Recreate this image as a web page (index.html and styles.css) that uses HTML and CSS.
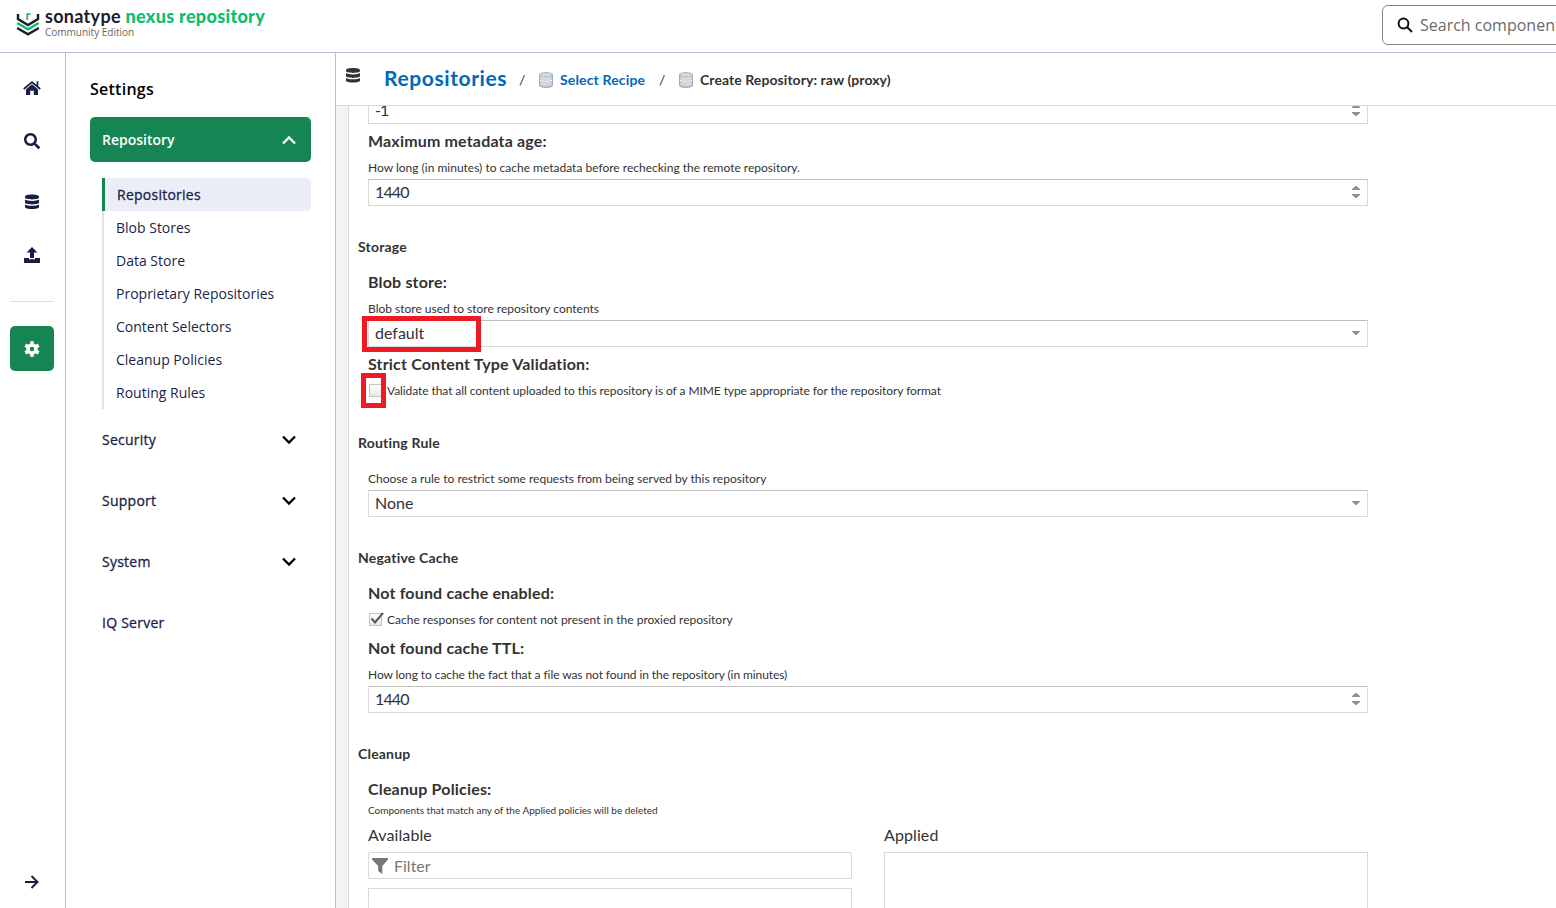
FILE: index.html
```html
<!DOCTYPE html>
<html lang="en">
<head>
<meta charset="UTF-8">
<title>Sonatype Nexus Repository</title>
<link rel="stylesheet" href="styles.css">
</head>
<body>
<svg class="defs">
<symbol id="database" viewBox="0 0 16 16"><path d="M1 3C1 .2 15 .2 15 3v1.1C15 6.600 1 6.600 1 4.100zM1 6c2 1.900 12 1.900 14 0v3c0 2.500-14 2.500-14 0zM1 10.900c2 1.900 12 1.900 14 0V13.500c0 2.700-14 2.700-14 0z"/></symbol>
<symbol id="search" viewBox="0 0 512 512"><path d="M505 442.700L405.300 343c-4.500-4.500-10.600-7-17-7H372c27.600-35.300 44-79.700 44-128C416 93.100 322.900 0 208 0S0 93.100 0 208s93.100 208 208 208c48.300 0 92.700-16.400 128-44v16.300c0 6.400 2.500 12.500 7 17l99.700 99.700c9.400 9.400 24.600 9.400 33.900 0l28.300-28.300c9.400-9.400 9.400-24.600.1-34zM208 336c-70.700 0-128-57.200-128-128 0-70.700 57.200-128 128-128 70.700 0 128 57.200 128 128 0 70.700-57.200 128-128 128z"/></symbol>
<symbol id="chevron" viewBox="0 0 14 10"><path d="M1 1.500l6 6 6-6" fill="none" stroke="currentColor" stroke-width="2.300"/></symbol>
<symbol id="spin" viewBox="0 0 8 12"><path d="M0 4v-1L3.500 0h1L8 3v1zM0 8v1L3.500 12h1L8 9v-1z"/></symbol>
<symbol id="drop" viewBox="0 0 8 4"><path d="M0 0h8v.5L4.500 4h-1L0 .5z"/></symbol>
<symbol id="store" viewBox="0 0 14 16">
<path d="M.5 2.500C.5 0 13.500 0 13.500 2.500v11c0 2.600-13 2.600-13 0z" fill="#b9c1cb" stroke="#98a1ac" stroke-width=".8"/>
<path d="M1.500 4.300c2 1.400 9 1.400 11 0v3c-2 1.600-9 1.600-11 0zM1.500 9.500c2 1.400 9 1.400 11 0v3.300c-2 1.700-9 1.700-11 0z" fill="#d3d9e0"/>
<ellipse cx="7" cy="2.700" rx="5.500" ry="1.400" fill="#cfdce2"/>
<path d="M1 8.200c2 1.500 10 1.500 12 0" fill="none" stroke="#fff"/>
</symbol>
</svg>

<header class="header">
<svg class="logo" width="24" height="26" viewBox="0 0 24 26" fill="none" stroke-width="2.500">
<path d="M2 3v5l10 6 10-6V3" stroke="#1b1c2e"/>
<path d="M1.200 12L12 18.300 22.800 12" stroke="#0abf6c"/>
<path d="M1.200 17L12 23.300 22.800 17" stroke="#1b1c2e"/>
<text x="12" y="9" text-anchor="middle" stroke="none">r</text>
</svg>
<div class="brand">
<div class="name">sonatype <b>nexus repository</b></div>
<div class="edition">Community Edition</div>
</div>
<div class="search">
<svg width="16" height="16" viewBox="0 0 16 16" fill="none" stroke="#111" stroke-width="2"><circle cx="6.500" cy="6.500" r="4.900"/><path d="M10 10l5 5"/></svg>
<span>Search components</span>
</div>
</header>

<div class="page">
<nav class="rail">
<a class="ricon"><svg width="18" height="16" viewBox="0 0 18 16"><path d="M9 4.200l6 5V15H10.800V10.800H7.200V15H3V9.200z"/><path d="M.7 9L9 2l8.300 7M14.500 1.200v5" fill="none" stroke="currentColor" stroke-width="1.700"/></svg></a>
<a class="ricon"><svg width="16" height="16"><use href="#search"/></svg></a>
<a class="ricon data"><svg width="16" height="17"><use href="#database"/></svg></a>
<a class="ricon"><svg width="16" height="16" viewBox="0 0 16 16"><path d="M8 0l5.500 5.500H10V11H6V5.500H2.500zM0 11h5v1.200h6V11h5v5H0z"/></svg></a>
<div class="rule"></div>
<a class="ricon gear"><svg width="16" height="16" viewBox="0 0 16 16" fill="none" stroke="#fff"><circle cx="8" cy="8" r="4" stroke-width="3.600"/><path d="M8 .3v3M8 12.700v3M1.300 4.150l2.600 1.500M12.100 10.350l2.600 1.500M1.300 11.850l2.600-1.500M12.100 5.650l2.600-1.500" stroke-width="3.600"/></svg></a>
<a class="ricon expand"><svg width="14" height="14" viewBox="0 0 14 14" fill="none" stroke="currentColor" stroke-width="2"><path d="M0 7h13M6.500 1l6 6-6 6"/></svg></a>
</nav>

<aside class="settings">
<h2>Settings</h2>
<div class="group open">Repository <svg class="up" width="14" height="10"><use href="#chevron"/></svg></div>
<ul>
<li class="active">Repositories</li>
<li>Blob Stores</li>
<li>Data Store</li>
<li>Proprietary Repositories</li>
<li>Content Selectors</li>
<li>Cleanup Policies</li>
<li>Routing Rules</li>
</ul>
<div class="group">Security <svg width="14" height="10"><use href="#chevron"/></svg></div>
<div class="group">Support <svg width="14" height="10"><use href="#chevron"/></svg></div>
<div class="group">System <svg width="14" height="10"><use href="#chevron"/></svg></div>
<div class="group">IQ Server</div>
</aside>

<main>
<div class="crumbs">
<svg class="cicon" width="16" height="18"><use href="#database"/></svg>
<a class="root">Repositories</a>
<span class="sep">/</span>
<svg width="14" height="16"><use href="#store"/></svg>
<a class="recipe">Select Recipe</a>
<span class="sep two">/</span>
<svg width="14" height="16"><use href="#store"/></svg>
<span class="current">Create Repository: raw (proxy)</span>
</div>

<div class="scroll">
<form class="form">
<div class="field first"><span class="num">-1</span><svg width="8" height="12"><use href="#spin"/></svg></div>

<label>Maximum metadata age:</label>
<p class="help">How long (in minutes) to cache metadata before rechecking the remote repository.</p>
<div class="field"><span class="num">1440</span><svg width="8" height="12"><use href="#spin"/></svg></div>

<h3>Storage</h3>
<label>Blob store:</label>
<p class="help">Blob store used to store repository contents</p>
<div class="field"><span>default</span><svg width="8" height="4"><use href="#drop"/></svg><i class="mark value"></i></div>
<label>Strict Content Type Validation:</label>
<p class="help check long"><span class="box"><i class="mark tick"></i></span>Validate that all content uploaded to this repository is of a MIME type appropriate for the repository format</p>

<h3>Routing Rule</h3>
<p class="help rule-help">Choose a rule to restrict some requests from being served by this repository</p>
<div class="field"><span>None</span><svg width="8" height="4"><use href="#drop"/></svg></div>

<h3>Negative Cache</h3>
<label>Not found cache enabled:</label>
<p class="help check"><span class="box"><svg width="14" height="13" viewBox="0 0 14 13"><path d="M1.500 6.500l3.500 4L13 1" fill="none" stroke="#555" stroke-width="2"/></svg></span>Cache responses for content not present in the proxied repository</p>
<label>Not found cache TTL:</label>
<p class="help long">How long to cache the fact that a file was not found in the repository (in minutes)</p>
<div class="field"><span class="num">1440</span><svg width="8" height="12"><use href="#spin"/></svg></div>

<h3>Cleanup</h3>
<label>Cleanup Policies:</label>
<p class="note">Components that match any of the Applied policies will be deleted</p>
<div class="policies">
<div>
<div class="caption">Available</div>
<div class="filter"><svg width="16" height="16" viewBox="0 0 16 16"><path d="M0 0h16v1.500L10.300 8v8L6.200 13V8L0 1.500z"/></svg>Filter</div>
<div class="list"></div>
</div>
<div>
<div class="caption">Applied</div>
<div class="list"></div>
</div>
</div>
</form>
</div>
</main>
</div>
</body>
</html>
```
FILE: styles.css
```css
*{
	box-sizing:border-box;
}
body{
	margin:0;
	height:908px;
	overflow:hidden;
	background:#fff;
	font-family:"Open Sans", sans-serif;
	font-size:14px;
	color:#1b1f48;
}
svg{
	display:block;
	flex:none;
	fill:currentColor;
}
svg[fill="none"]{
	fill:none;
}
.defs{
	display:none;
}
.header{
	height:53px;
	border-bottom:1px solid #b3bbdf;
	display:flex;
	overflow:hidden;
}
.logo{
	margin:11px 0 0 16px;
	overflow:visible;
}
.logo text{
	font:bold 13px Lato, sans-serif;
	fill:#0abf6c;
}
.brand{
	margin:6px 0 0 5px;
	width:1332px;
	flex:none;
}
.name{
	font:bold 18px/21px Lato, sans-serif;
	color:#1b1c2e;
	letter-spacing:0.3px;
	white-space:nowrap;
}
.name b{
	color:#0abf6c;
}
.edition{
	font-size:10px;
	line-height:12px;
	margin-top:-1px;
	color:#666;
}
.search{
	flex:none;
	width:330px;
	height:40px;
	margin:5px 0 0 5px;
	padding-left:14px;
	border:1px solid #85857a;
	border-radius:6px;
	display:flex;
	align-items:center;
	gap:7px;
	font-size:16px;
	color:#6b6b6b;
}
.page{
	display:flex;
	height:855px;
}
.rail{
	width:66px;
	flex:none;
	border-right:1px solid #b9bcdc;
	display:flex;
	flex-direction:column;
	align-items:center;
	padding:12px 1px 4px 0;
}
.ricon{
	width:44px;
	height:45px;
	flex:none;
	display:flex;
	align-items:center;
	justify-content:center;
	margin-bottom:8px;
}
.data{
	margin-top:8px;
}
.rule{
	width:44px;
	height:1px;
	margin:16px 0 24px;
	background:#d9daea;
}
.gear{
	background:#158653;
	border-radius:5px;
}
.expand{
	margin:auto 0 0;
}
.settings{
	width:270px;
	flex:none;
	border-right:1px solid #b9bcdc;
	padding:24px 24px 0;
}
.settings h2{
	margin:0 0 16px;
	font-size:16px;
	line-height:24px;
	font-weight:600;
	letter-spacing:0.25px;
	color:#000;
}
.group{
	height:45px;
	margin-bottom:16px;
	padding:0 15px 0 12px;
	display:flex;
	align-items:center;
	justify-content:space-between;
	letter-spacing:0.25px;
	-webkit-text-stroke:0.3px;
}
.group svg{
	color:#000;
}
.group.open{
	background:#158653;
	color:#fff;
	border-radius:5px;
	font-weight:600;
	letter-spacing:0;
	-webkit-text-stroke:0;
}
.group .up{
	color:#fff;
	transform:rotate(180deg);
}
.settings ul{
	list-style:none;
	margin:0 0 8px 12px;
	padding:0;
}
.settings li{
	height:33px;
	line-height:33px;
	border-left:2px solid #e3e3df;
	padding-left:12px;
}
.settings .active{
	border-left:3px solid #158653;
	background:#ebeef8;
	border-radius:0 5px 5px 0;
	letter-spacing:0.25px;
	-webkit-text-stroke:0.3px;
}
main{
	flex:1;
	min-width:0;
	display:flex;
	flex-direction:column;
	font-family:Lato, sans-serif;
	color:#333;
}
.crumbs{
	height:53px;
	flex:none;
	border-bottom:1px solid #d9d9d9;
	display:flex;
	align-items:center;
	padding:1px 0 0 9px;
	font-size:14px;
	font-weight:bold;
	white-space:nowrap;
}
.crumbs a{
	color:#0068b8;
}
.cicon{
	margin-bottom:10px;
}
.root{
	width:123px;
	margin:-5px 0 0 23px;
	font-size:21px;
	letter-spacing:0.6px;
}
.crumbs .recipe{
	width:85px;
	margin-left:7px;
	letter-spacing:0.15px;
}
.sep{
	width:6px;
	margin:0 14px 0 12px;
	font-weight:normal;
}
.two{
	margin:0 14px;
}
.current{
	margin-left:7px;
	letter-spacing:0.07px;
}
.scroll{
	flex:1;
	overflow:hidden;
	background:#f3f3f3;
	padding-left:12px;
}
.form{
	height:900px;
	background:#fff;
	border-left:1px solid #d9d9d9;
	padding:0 188px 0 19px;
}
.field{
	position:relative;
	height:27px;
	border:1px solid #d9d9d9;
	border-top-color:#c0c0c0;
	padding:0 7px 2px 6px;
	display:flex;
	align-items:center;
	justify-content:space-between;
	font-size:16px;
	color:#333;
}
.field svg{
	color:#919191;
}
.num{
	letter-spacing:-0.9px;
}
.first{
	margin-top:-9px;
}
label{
	display:block;
	height:34px;
	line-height:33px;
	font-size:16px;
	font-weight:bold;
	letter-spacing:0.17px;
}
.help{
	margin:0;
	height:21px;
	line-height:20px;
	font-size:12px;
	white-space:nowrap;
}
.long{
	letter-spacing:-0.08px;
}
.rule-help{
	margin-top:15px;
}
h3{
	margin:30px 0 7px -10px;
	font-size:14px;
	line-height:22px;
	letter-spacing:0.2px;
}
.check{
	display:flex;
	align-items:center;
	padding-bottom:2px;
}
.box{
	position:relative;
	width:13px;
	height:13px;
	margin:0 5px 0 1px;
	border:1px solid #c4c4c4;
	background:linear-gradient(#fff, #e8e8e8);
}
.box svg{
	position:absolute;
	left:0;
	top:-2px;
}
/* red highlights around the values to change */
.mark{
	position:absolute;
	border:5px solid #ed1c24;
}
.value{
	left:-7px;
	top:-5px;
	width:119px;
	height:36px;
}
.tick{
	left:-9px;
	top:-12px;
	width:25px;
	height:35px;
}
.note{
	margin:0;
	font-size:10px;
	line-height:8px;
}
.policies{
	display:grid;
	grid-template-columns:484px 484px;
	gap:32px;
}
.caption{
	padding-top:4px;
	font-size:16px;
	line-height:34px;
	letter-spacing:0.1px;
}
.filter{
	height:27px;
	margin-bottom:9px;
	padding-left:3px;
	border:1px solid #d9d9d9;
	border-radius:2px;
	display:flex;
	align-items:center;
	gap:6px;
	font-size:16px;
	color:#777;
}
.list{
	height:100px;
	border:1px solid #d9d9d9;
}
```
